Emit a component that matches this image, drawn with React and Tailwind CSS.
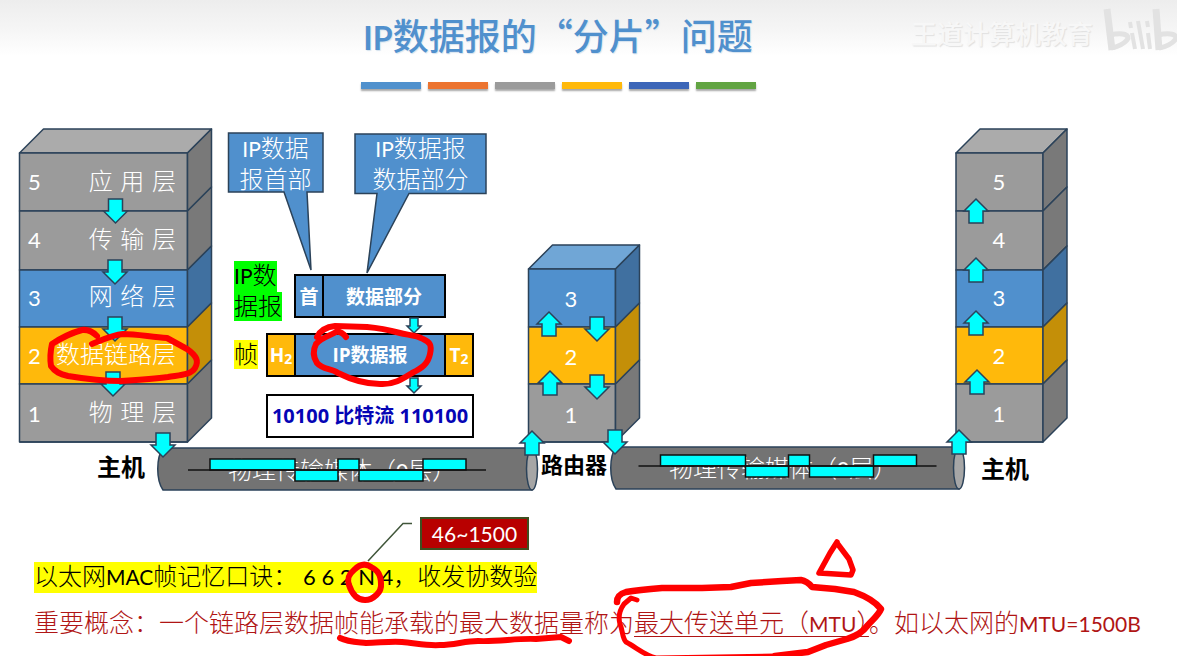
import React from "react";

const EDGE = "#2b4259";
const GRAY = { front: "#9b9b9b", side: "#797979" };
const BLUE = { front: "#5090cd", side: "#4070a0" };
const GOLD = { front: "#ffb90b", side: "#c48f08" };

const BARS = [
  "bg-[#5091cd]",
  "bg-[#ec7430]",
  "bg-[#9b9b9b]",
  "bg-[#ffb90b]",
  "bg-[#3c66b8]",
  "bg-[#62a442]",
];

function Stack({ x, width, bounds, layers, top }) {
  const right = x + width;
  const last = bounds.length - 1;
  return (
    <g stroke={EDGE} strokeWidth="1.5" strokeLinejoin="round">
      <polygon
        fill={top}
        points={`${x},${bounds[0]} ${x + 24},${bounds[0] - 24} ${right + 24},${bounds[0] - 24} ${right},${bounds[0]}`}
      />
      {layers.map((c, i) => (
        <g key={i}>
          <rect x={x} y={bounds[i]} width={width} height={bounds[i + 1] - bounds[i]} fill={c.front} />
          <polygon
            fill={c.side}
            points={`${right},${bounds[i]} ${right + 24},${bounds[i] - 24} ${right + 24},${bounds[i + 1] - 24} ${right},${bounds[i + 1]}`}
          />
        </g>
      ))}
      <line x1={x} y1={bounds[last]} x2={right} y2={bounds[last]} />
    </g>
  );
}

function Arrow({ x, y, up = false, small = false }) {
  const down = small
    ? "M-4 0H4V8H7L0 15L-7 8H-4Z"
    : "M-7 0H7V12H12L0 24L-12 12H-7Z";
  const upward = "M-7 24H7V12H12L0 0L-12 12H-7Z";
  return (
    <path
      d={up ? upward : down}
      transform={`translate(${x} ${y})`}
      fill="#00ffff"
      stroke={EDGE}
      strokeWidth="1.5"
    />
  );
}

function Pipe({ x1, x2, y }) {
  return (
    <g stroke={EDGE} strokeWidth="1.5">
      <path
        fill="#737373"
        d={`M${x1 + 5} ${y}H${x2}V${y + 42}H${x1 + 5}C${x1 - 2} ${y + 32} ${x1 - 2} ${y + 10} ${x1 + 5} ${y}Z`}
      />
      <ellipse cx={x2} cy={y + 21} rx="5.5" ry="21" fill="#a6a6a6" />
    </g>
  );
}

function Wave({ x, y }) {
  return (
    <g transform={`translate(${x} ${y})`} fill="#00ffff" stroke="#111" strokeWidth="1.5">
      <rect x="22" y="-11" width="85" height="11" />
      <rect x="107" y="0" width="43" height="11" />
      <rect x="150" y="-11" width="21" height="11" />
      <rect x="171" y="0" width="64" height="11" />
      <rect x="235" y="-11" width="43" height="11" />
      <path d="M0 0H298" />
    </g>
  );
}

const Latin = ({ children }) => <span className="font-['Lato',sans-serif] text-[21px] font-normal">{children}</span>;

function LayerNumbers({ numbers, className }) {
  return (
    <div className={`absolute grid text-center font-['Lato',sans-serif] text-[22px] text-white ${className}`}>
      {numbers.map((n) => (
        <span key={n} className="self-center">{n}</span>
      ))}
    </div>
  );
}

function Diagram() {
  const full = [GRAY, GRAY, BLUE, GOLD, GRAY];
  const fullBounds = [153, 211, 270, 327, 384, 442];
  const hostLayers = [
    ["5", "应 用 层"],
    ["4", "传 输 层"],
    ["3", "网 络 层"],
    ["2", "数据链路层"],
    ["1", "物 理 层"],
  ];
  return (
    <section className="relative h-[380px]">
      <svg className="absolute left-0 top-0" width="1177" height="380" viewBox="0 120 1177 380" aria-hidden="true">
        <Stack x={19.5} width={168} bounds={fullBounds} layers={full} top="#ababab" />
        <Stack x={528.5} width={87} bounds={[269, 327, 384, 442]} layers={[BLUE, GOLD, GRAY]} top="#70a6d6" />
        <Stack x={956} width={87} bounds={fullBounds} layers={full} top="#ababab" />
        <Pipe x1={158} x2={532} y={448} />
        <Pipe x1={611} x2={959} y={447} />
        <g fill="#5090cd" stroke={EDGE} strokeWidth="1.5">
          <path d="M228.5 133H323V192H307L311 270L284 192H228.5Z" />
          <path d="M355 134H486V193.500H409L367 273L377 193.500H355Z" />
        </g>
      </svg>

      <div className="absolute left-[19px] top-[33px] grid h-[289px] w-[168px] grid-rows-5 text-white">
        {hostLayers.map(([n, name]) => (
          <div key={n} className="flex items-center justify-between pl-[9px] pr-[11px]">
            <span className="font-['Lato',sans-serif] text-[22px]">{n}</span>
            <span className="whitespace-nowrap font-['DejaVu_Sans','Noto_Sans_CJK_SC',sans-serif] text-2xl font-light">{name}</span>
          </div>
        ))}
      </div>
      <LayerNumbers numbers={["3", "2", "1"]} className="left-[528px] top-[150px] h-[173px] w-[86px] grid-rows-3" />
      <LayerNumbers numbers={["5", "4", "3", "2", "1"]} className="left-[956px] top-[33px] h-[289px] w-[86px] grid-rows-5" />

      <p className="absolute left-[228px] top-3 w-[95px] text-center text-2xl/[29px] font-light text-white">
        <Latin>IP</Latin>数据<br />报首部
      </p>
      <p className="absolute left-[355px] top-3 w-[131px] text-center text-2xl/[29px] font-light text-white">
        <Latin>IP</Latin>数据报<br />数据部分
      </p>

      <p className="absolute left-[234px] top-[141px] flex flex-col items-start text-2xl/[25px] font-light">
        <span className="bg-[#00ff00] pb-1"><Latin>IP</Latin>数</span>
        <span className="bg-[#00ff00] pb-1">据报</span>
      </p>
      <p className="absolute left-[234px] top-[220px] bg-[#ffff00] pb-1 text-2xl/[25px] font-light">帧</p>

      <div className="absolute left-[294px] top-[154px] flex h-11 w-[152px] items-stretch border-2 border-black bg-[#5090cd] text-[19px] font-bold text-white">
        <span className="flex w-7 items-center justify-center border-r-2 border-black">首</span>
        <span className="flex flex-1 items-center justify-center">数据部分</span>
      </div>
      <div className="absolute left-[266px] top-[213px] flex h-11 w-[208px] items-stretch border-2 border-black bg-[#5090cd] font-['Open_Sans','Noto_Sans_CJK_SC',sans-serif] text-[19px] font-bold text-white">
        <span className="flex w-[26px] items-center justify-center bg-[#ffb90b]">H<sub className="text-sm">2</sub></span>
        <span className="flex flex-1 items-center justify-center border-x-2 border-black">IP数据报</span>
        <span className="flex w-[26px] items-center justify-center bg-[#ffb90b]">T<sub className="text-sm">2</sub></span>
      </div>
      <div className="absolute left-[266px] top-[274px] flex h-11 w-[208px] items-center justify-center whitespace-nowrap border-2 border-black bg-white font-['Open_Sans','Noto_Sans_CJK_SC',sans-serif] text-xl font-bold text-[#0505b5]">
        10100 比特流 110100
      </div>

      <p className="absolute left-[228px] top-[334px] whitespace-nowrap text-2xl/[29px] font-light text-white">物理传输媒体（<Latin>0</Latin>层）</p>
      <p className="absolute left-[669px] top-[332px] whitespace-nowrap text-2xl/[29px] font-light text-white">物理传输媒体（<Latin>0</Latin>层）</p>
      <p className="absolute left-[97px] top-[331px] text-2xl/[29px] font-bold">主机</p>
      <p className="absolute left-[541px] top-[329px] text-[22px]/[29px] font-bold">路由器</p>
      <p className="absolute left-[981px] top-[333px] text-2xl/[29px] font-bold">主机</p>

      <svg className="absolute left-0 top-0" width="1177" height="380" viewBox="0 120 1177 380" aria-hidden="true">
        <Wave x={188} y={470} />
        <Wave x={638.500} y={466} />
        <Arrow x={115.500} y={199} />
        <Arrow x={115} y={260} />
        <Arrow x={115} y={317} />
        <Arrow x={113} y={372} />
        <Arrow x={163} y={433} />
        <Arrow x={597} y={317} />
        <Arrow x={597} y={375} />
        <Arrow x={615} y={430} />
        <Arrow up x={549} y={312} />
        <Arrow up x={550} y={371} />
        <Arrow up x={532} y={431} />
        <Arrow up x={976} y={199} />
        <Arrow up x={976} y={258} />
        <Arrow up x={976} y={311} />
        <Arrow up x={977} y={370} />
        <Arrow up x={959} y={430} />
        <Arrow small x={414} y={318} />
        <Arrow small x={414} y={378} />
      </svg>
    </section>
  );
}

function Ink() {
  return (
    <svg className="pointer-events-none absolute left-0 top-0" width="1177" height="656" viewBox="0 0 1177 656" aria-hidden="true">
      <path d="M412 523.500H403L368 561" fill="none" stroke="#40563a" strokeWidth="1.5" />
      <g fill="none" stroke="#ff0000" strokeLinecap="round" strokeLinejoin="round">
        <path strokeWidth="6" d="M97 336Q90 329 82 330C71 333 61 338 52 344C50 353 50 360 51 366C55 372 60 374 68 376C86 379 105 381 121 381C138 380 154 379 168 377C179 375 191 375 195 368C199 361 197 356 187 349L167 338C151 337 137 334 123 334C112 335 102 340 92 344" />
        <path strokeWidth="6" d="M346 337Q341 331 336 332C329 336 321 338 316 344C313 350 313 357 317 363C323 370 331 368 338 373C352 380 366 384 380 384C394 385 404 378 412 373C422 368 428 364 430 354C432 345 430 342 423 339C416 335 407 335 400 333C389 330 379 328 367 327L335 326C325 327 320 331 317 337" />
        <path strokeWidth="6" d="M371 567C364 562 358 566 354 570C348 575 347 579 349 585C352 594 357 600 365 600C373 600 382 592 381 584C381 573 376 568 366 565" />
        <path strokeWidth="6" d="M340 638C348 642 357 642 366 643C378 643 390 641 402 642C415 643 427 646 440 645C454 645 465 641 478 641C498 642 517 638 536 639L561 637L569 641" />
        <path strokeWidth="5.500" d="M837 542L830 553L819 573L851 575L853 570L849 559L837 543" />
        <path strokeWidth="6.500" d="M617 602C617 597 619 594 626 592C638 590 650 589 662 588L702 588L731 587L751 583L782 581L801 580Q807 581 812 587L835 589L854 592C865 596 875 601 881 609C878 616 872 620 868 625C862 633 856 636 847 639L826 645L808 652L775 656" />
        <path strokeWidth="5" d="M775 656L656 658C646 656 637 648 626 642C622 638 623 631 620 624C618 617 619 611 624 604L631 598L637 600" />
      </g>
    </svg>
  );
}

function Watermark() {
  return (
    <div className="absolute right-0 top-0 flex h-[60px] items-center gap-2 overflow-hidden" aria-hidden="true">
      <span className="whitespace-nowrap pt-1 text-[26px] font-medium text-[#f7f7f7] [text-shadow:1px_1px_1px_#e0e0e0]">王道计算机教育</span>
      <svg width="76" height="60" viewBox="0 0 76 60" fill="none" stroke="#e2e2e2" strokeLinecap="butt" strokeLinejoin="round">
        <path strokeWidth="7" d="M6 9L11 50" />
        <path strokeWidth="5" d="M9 35C22 32 30 35 26 40C22 45 15 47 10 48" />
        <path strokeWidth="4" d="M31 33L34 49M29 22L30 28M37 21L42 49M47 33L49 49M46 21L47 27" />
        <path strokeWidth="7" d="M55 9L58 50" />
        <path strokeWidth="5" d="M57 35C70 32 78 35 74 40C70 45 63 47 58 48" />
      </svg>
    </div>
  );
}

export default function App() {
  return (
    <main
      lang="zh-CN"
      className="relative min-h-screen overflow-hidden bg-white bg-[linear-gradient(to_bottom,#ededed_0px,#f5f5f5_28px,#ffffff_56px)] font-['Noto_Sans_CJK_SC',sans-serif] text-black"
    >
      <Watermark />
      <header className="flex h-[120px] flex-col items-center pr-[61px] pt-2.5">
        <h1 className="whitespace-nowrap text-4xl/[48px] font-medium text-[#5090cd] [text-shadow:1px_1px_1px_#d4e2ee]">
          <span className="font-['Lato',sans-serif] text-[32px] font-bold">IP</span>数据报的“分片”问题
        </h1>
        <div className="mt-5 flex gap-[7px]">
          {BARS.map((color) => (
            <span key={color} className={`h-[7px] w-[60px] shadow-[0_2px_2px_rgba(0,0,0,0.35)] ${color}`} />
          ))}
        </div>
      </header>

      <Diagram />

      <section className="pl-[34px] pt-[17px]">
        <p className="ml-[386px] flex h-[33px] w-[109px] items-center justify-center border-2 border-[#3f4f20] bg-[#b80000] font-['Lato',sans-serif] text-[21px] text-white">
          46~1500
        </p>
        <p className="mt-3 w-fit whitespace-nowrap bg-[#ffff00] pb-1 text-2xl/[25px] font-light">
          以太网<Latin>MAC</Latin>帧记忆口诀：<span className="font-['Lato',sans-serif] text-[22px] font-normal"> 6 6 2 N 4</span>，收发协数验
        </p>
        <p className="mt-4 whitespace-nowrap text-[25px]/[25px] font-light text-[#b01515]">
          重要概念：一个链路层数据帧能承载的最大数据量称为
          <span className="underline decoration-1 underline-offset-4">最大传送单元（<Latin>MTU</Latin>）</span>
          。如以太网的<Latin>MTU=1500B</Latin>
        </p>
      </section>

      <Ink />
    </main>
  );
}
